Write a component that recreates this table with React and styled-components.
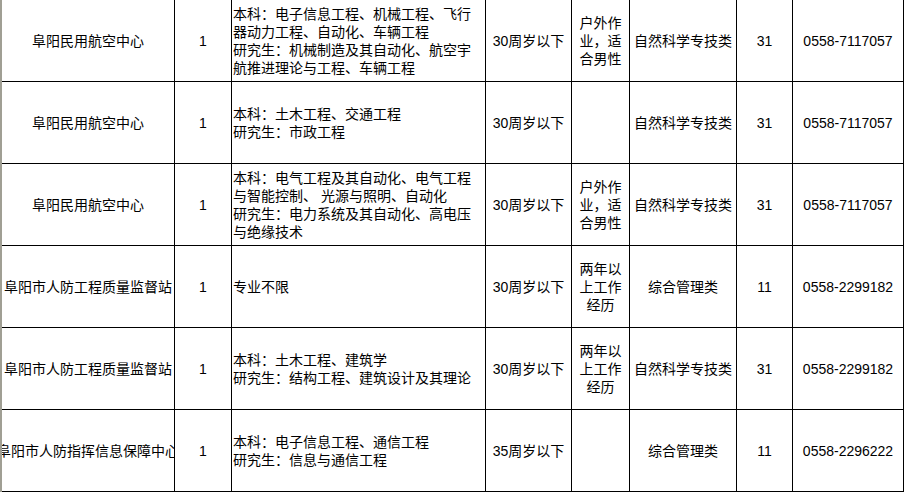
import React from "react";
import styled, { createGlobalStyle } from "styled-components";

const Global = createGlobalStyle`
  html, body { margin: 0; padding: 0; background: #fff; }
  body { font-family: "Liberation Sans", "Noto Sans CJK SC", sans-serif; }
`;

const Sheet = styled.div`
  width: 902px;
  border-left: 2px solid #a09f94;
  background: #fff;
`;

const Row = styled.div`
  display: grid;
  grid-template-columns: 173px 57px 254px 86px 58px 107px 56px 111px;
  height: 82px;
`;

const Cell = styled.div`
  box-sizing: border-box;
  border-right: 1px solid #000;
  border-bottom: 1px solid #000;
  display: flex;
  flex-direction: column;
  justify-content: center;
  align-items: ${(p) => (p.$left ? "flex-start" : "center")};
  text-align: ${(p) => (p.$left ? "left" : "center")};
  padding-left: ${(p) => (p.$left ? "1px" : "0")};
  overflow: hidden;
  font-size: 14px;
  line-height: 18px;
  color: #000;
  white-space: nowrap;
`;

const Line = styled.span`
  display: block;
  white-space: pre;
`;

const rows = [
  {
    unit: "阜阳民用航空中心",
    num: "1",
    desc: [
      "本科：电子信息工程、机械工程、飞行",
      "器动力工程、自动化、车辆工程",
      "研究生：机械制造及其自动化、航空宇",
      "航推进理论与工程、车辆工程",
    ],
    age: "30周岁以下",
    note: ["户外作", "业，适", "合男性"],
    cat: "自然科学专技类",
    code: "31",
    tel: "0558-7117057",
  },
  {
    unit: "阜阳民用航空中心",
    num: "1",
    desc: ["本科：土木工程、交通工程", "研究生：市政工程"],
    age: "30周岁以下",
    note: [],
    cat: "自然科学专技类",
    code: "31",
    tel: "0558-7117057",
  },
  {
    unit: "阜阳民用航空中心",
    num: "1",
    desc: [
      "本科：电气工程及其自动化、电气工程",
      "与智能控制、 光源与照明、自动化",
      "研究生：电力系统及其自动化、高电压",
      "与绝缘技术",
    ],
    age: "30周岁以下",
    note: ["户外作", "业，适", "合男性"],
    cat: "自然科学专技类",
    code: "31",
    tel: "0558-7117057",
  },
  {
    unit: "阜阳市人防工程质量监督站",
    num: "1",
    desc: ["专业不限"],
    age: "30周岁以下",
    note: ["两年以", "上工作", "经历"],
    cat: "综合管理类",
    code: "11",
    tel: "0558-2299182",
  },
  {
    unit: "阜阳市人防工程质量监督站",
    num: "1",
    desc: ["本科：土木工程、建筑学", "研究生：结构工程、建筑设计及其理论"],
    age: "30周岁以下",
    note: ["两年以", "上工作", "经历"],
    cat: "自然科学专技类",
    code: "31",
    tel: "0558-2299182",
  },
  {
    unit: "阜阳市人防指挥信息保障中心",
    num: "1",
    desc: ["本科：电子信息工程、通信工程", "研究生：信息与通信工程"],
    age: "35周岁以下",
    note: [],
    cat: "综合管理类",
    code: "11",
    tel: "0558-2296222",
  },
];

export default function App() {
  return (
    <>
      <Global />
      <Sheet>
        {rows.map((r, i) => (
          <Row key={i}>
            <Cell>{r.unit}</Cell>
            <Cell>{r.num}</Cell>
            <Cell $left>
              {r.desc.map((l, j) => (
                <Line key={j}>{l}</Line>
              ))}
            </Cell>
            <Cell>{r.age}</Cell>
            <Cell>
              {r.note.map((l, j) => (
                <Line key={j}>{l}</Line>
              ))}
            </Cell>
            <Cell>{r.cat}</Cell>
            <Cell>{r.code}</Cell>
            <Cell>{r.tel}</Cell>
          </Row>
        ))}
      </Sheet>
    </>
  );
}
